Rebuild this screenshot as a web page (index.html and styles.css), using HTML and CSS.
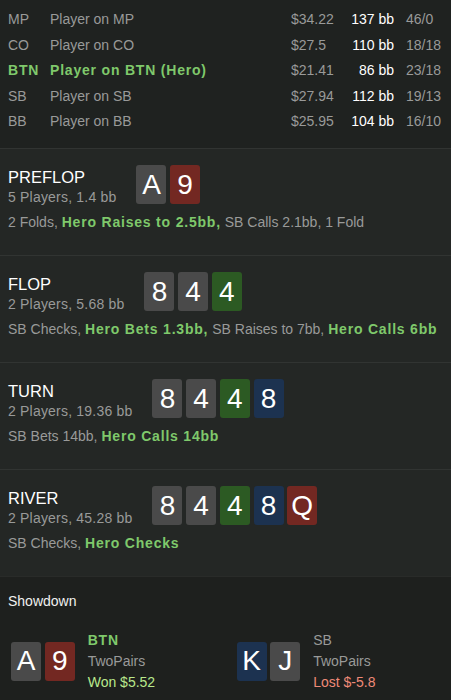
FILE: index.html
```html
<!DOCTYPE html>
<html>
<head>
<meta charset="utf-8">
<link rel="stylesheet" href="styles.css">
</head>
<body>
<div class="players">
  <div class="prow"><span class="pos">MP</span><span class="name">Player on MP</span><span class="money">$34.22</span><span class="stack">137 bb</span><span class="stats">46/0</span></div>
  <div class="prow"><span class="pos">CO</span><span class="name">Player on CO</span><span class="money">$27.5</span><span class="stack">110 bb</span><span class="stats">18/18</span></div>
  <div class="prow hero"><span class="pos">BTN</span><span class="name">Player on BTN (Hero)</span><span class="money">$21.41</span><span class="stack">86 bb</span><span class="stats">23/18</span></div>
  <div class="prow"><span class="pos">SB</span><span class="name">Player on SB</span><span class="money">$27.94</span><span class="stack">112 bb</span><span class="stats">19/13</span></div>
  <div class="prow"><span class="pos">BB</span><span class="name">Player on BB</span><span class="money">$25.95</span><span class="stack">104 bb</span><span class="stats">16/10</span></div>
</div>

<div class="street">
  <div class="street-head">
    <div class="street-info"><div class="street-title">PREFLOP</div><div class="street-sub">5 Players, 1.4 bb</div></div>
    <div class="cards"><span class="card gray">A</span><span class="card red">9</span></div>
  </div>
  <div class="actions">2 Folds, <b class="hl">Hero Raises to 2.5bb,</b> SB Calls 2.1bb, 1 Fold</div>
</div>

<div class="street">
  <div class="street-head">
    <div class="street-info"><div class="street-title">FLOP</div><div class="street-sub">2 Players, 5.68 bb</div></div>
    <div class="cards"><span class="card gray">8</span><span class="card gray">4</span><span class="card green">4</span></div>
  </div>
  <div class="actions">SB Checks, <b class="hl">Hero Bets 1.3bb,</b> SB Raises to 7bb, <b class="hl">Hero Calls 6bb</b></div>
</div>

<div class="street">
  <div class="street-head">
    <div class="street-info"><div class="street-title">TURN</div><div class="street-sub">2 Players, 19.36 bb</div></div>
    <div class="cards"><span class="card gray">8</span><span class="card gray">4</span><span class="card green">4</span><span class="card blue">8</span></div>
  </div>
  <div class="actions">SB Bets 14bb, <b class="hl">Hero Calls 14bb</b></div>
</div>

<div class="street">
  <div class="street-head">
    <div class="street-info"><div class="street-title">RIVER</div><div class="street-sub">2 Players, 45.28 bb</div></div>
    <div class="cards"><span class="card gray">8</span><span class="card gray">4</span><span class="card green">4</span><span class="card blue">8</span><span class="card red">Q</span></div>
  </div>
  <div class="actions">SB Checks, <b class="hl">Hero Checks</b></div>
</div>

<div class="showdown">
  <div class="sd-title">Showdown</div>
  <div class="sd-players">
    <div class="sd-player">
      <div class="cards"><span class="card gray">A</span><span class="card red">9</span></div>
      <div class="sd-info"><div class="sd-pos hl">BTN</div><div class="sd-hand">TwoPairs</div><div class="won">Won $5.52</div></div>
    </div>
    <div class="sd-player">
      <div class="cards"><span class="card blue">K</span><span class="card gray">J</span></div>
      <div class="sd-info"><div class="sd-pos">SB</div><div class="sd-hand">TwoPairs</div><div class="lost">Lost $-5.8</div></div>
    </div>
  </div>
</div>
</body>
</html>
```

FILE: styles.css
```css
html, body {
  margin: 0;
  padding: 0;
}
body {
  background: #1e201e;
  font-family: "Liberation Sans", Arial, sans-serif;
  font-size: 14px;
  color: #999a99;
  width: 451px;
  overflow: hidden;
}
.players {
  background: #1f2220;
  padding: 7px 0 13px 8px;
  height: 148px;
  box-sizing: border-box;
}
.prow {
  display: grid;
  grid-template-columns: 42px 241px 59px 44px 57px;
  height: 25.6px;
  line-height: 25.6px;
  white-space: nowrap;
}
.stack {
  color: #ffffff;
  text-align: right;
}
.stats {
  padding-left: 12px;
}
.hero .pos, .hero .name {
  color: #7fc96b;
  font-weight: bold;
  letter-spacing: 0.8px;
}
.hl {
  color: #7fc96b;
  font-weight: bold;
  letter-spacing: 0.8px;
}
.street {
  background: #242725;
  border-top: 1px solid #313432;
  height: 107px;
  box-sizing: border-box;
  padding: 16px 8px 0;
}
.street-head {
  display: flex;
  align-items: flex-start;
  gap: 20px;
}
.street-info {
  margin-top: 1px;
  white-space: nowrap;
}
.street-title {
  color: #ffffff;
  font-size: 16.5px;
  line-height: 22px;
}
.street-sub {
  line-height: 18px;
  letter-spacing: 0.2px;
}
.actions {
  margin-top: 7px;
  line-height: 18px;
  white-space: nowrap;
}
.cards {
  display: flex;
  gap: 3.7px;
}
.card {
  width: 30px;
  height: 39px;
  border-radius: 3px;
  display: flex;
  align-items: center;
  justify-content: center;
  color: #ffffff;
  font-size: 28px;
  line-height: 1;
}
.card.gray { background: #4a4a4a; }
.card.red { background: #732822; }
.card.green { background: #2c5a23; }
.card.blue { background: #1c3250; }
.showdown {
  background: #1e201e;
  border-top: 1px solid #292b29;
  height: 124px;
  box-sizing: border-box;
  padding-top: 15px;
}
.sd-title {
  color: #f0f0f0;
  padding-left: 8px;
  line-height: 18px;
}
.sd-players {
  display: grid;
  grid-template-columns: 225.5px 225.5px;
  margin-top: 19.5px;
}
.sd-player {
  display: flex;
  align-items: center;
  padding-left: 11px;
  gap: 13px;
}
.sd-info {
  line-height: 21px;
  white-space: nowrap;
}
.sd-pos.hl {
  letter-spacing: 0.8px;
}
.won {
  color: #b8e88c;
}
.lost {
  color: #ef8a78;
}
```
